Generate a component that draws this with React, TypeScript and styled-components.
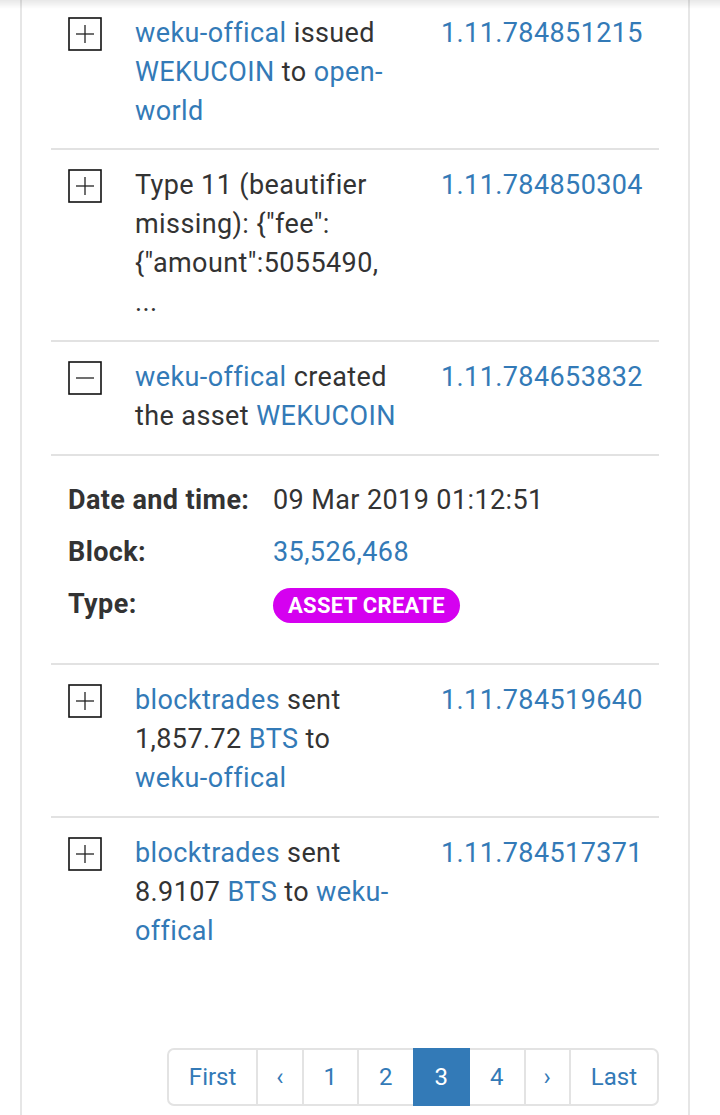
import * as React from 'react';
import styled, { createGlobalStyle } from 'styled-components';

const GlobalStyle = createGlobalStyle`
  html, body {
    margin: 0;
    padding: 0;
    background: #fff;
  }
  body {
    font-family: Roboto, "Noto Sans", "Liberation Sans", sans-serif;
    font-size: 27px;
    letter-spacing: 0.4px;
    line-height: 39px;
    color: #333;
  }
`;

const TopShadow = styled.div`
  position: fixed;
  top: 0;
  left: 0;
  right: 0;
  height: 9px;
  background: linear-gradient(rgba(0, 0, 0, 0.09), rgba(0, 0, 0, 0));
  pointer-events: none;
  z-index: 10;
`;

const Card = styled.div`
  margin: -2px 30px 0 20px;
  padding: 0 29px 40px;
  border: 2px solid #e6e6e6;
  border-top: none;
  min-height: 1200px;
  box-sizing: border-box;
  background: #fff;
`;

const List = styled.div`
  display: flex;
  flex-direction: column;
`;

const Row = styled.div<{ last?: boolean }>`
  display: grid;
  grid-template-columns: 84px 306px 1fr;
  padding: 16px 0 ${props => (props.last ? '16px' : '18px')};
  border-bottom: ${props => (props.last ? 'none' : '2px solid #e2e2e2')};

  &:first-child {
    padding-bottom: 17px;
  }
`;

const ToggleCell = styled.div`
  padding-left: 17px;
  padding-top: 3px;
`;

const ToggleBox = styled.svg`
  display: block;
  width: 34px;
  height: 34px;
`;

const Description = styled.div`
  padding-right: 40px;
`;

const OpId = styled.div`
  white-space: nowrap;
`;

const Link = styled.a`
  color: #337ab7;
  text-decoration: none;
`;

const Details = styled.div`
  display: grid;
  grid-template-columns: 205px 1fr;
  grid-auto-rows: 52px;
  align-items: center;
  padding: 18px 0 33px 17px;
  border-bottom: 2px solid #e2e2e2;
`;

const Label = styled.div`
  font-weight: 700;
`;

const Value = styled.div`
  white-space: nowrap;
`;

const Badge = styled.span`
  display: inline-block;
  height: 35px;
  line-height: 35px;
  padding: 0 15px;
  border-radius: 18px;
  background: #d500f0;
  color: #fff;
  font-size: 22px;
  letter-spacing: 0.3px;
  font-weight: 700;
  text-transform: uppercase;
  vertical-align: middle;
`;

const Pager = styled.nav`
  display: flex;
  justify-content: flex-end;
  margin-top: 81px;
`;

const PageList = styled.ul`
  display: flex;
  list-style: none;
  margin: 0;
  padding: 0;
`;

const PageItem = styled.li<{ active?: boolean; arrow?: boolean }>`
  display: flex;
  align-items: center;
  justify-content: center;
  height: 58px;
  padding: 0 ${props => (props.arrow ? '18px' : '20px')};
  box-sizing: border-box;
  margin-left: -2px;
  border: 2px solid ${props => (props.active ? '#337ab7' : '#e3e3e3')};
  background: ${props => (props.active ? '#337ab7' : '#fff')};
  color: ${props => (props.active ? '#fff' : '#337ab7')};
  font-size: 24px;
  letter-spacing: 0;
  position: relative;
  z-index: ${props => (props.active ? 1 : 0)};

  &:first-child {
    margin-left: 0;
    border-radius: 7px 0 0 7px;
  }
  &:last-child {
    border-radius: 0 7px 7px 0;
  }
`;

const Toggle: React.FC<{ open?: boolean }> = ({ open }) => (
  <ToggleBox viewBox="0 0 34 34">
    <rect x="1" y="1" width="32" height="32" fill="#fff" stroke="#111" strokeWidth="1.6" />
    <line x1="8" y1="17" x2="26" y2="17" stroke="#222" strokeWidth="1.3" />
    {!open && <line x1="17" y1="8" x2="17" y2="26" stroke="#222" strokeWidth="1.3" />}
  </ToggleBox>
);

type Op = {
  id: string;
  open?: boolean;
  text: React.ReactNode;
};

const ops: Op[] = [
  {
    id: '1.11.784851215',
    text: (
      <>
        <Link>weku-offical</Link> issued <Link>WEKUCOIN</Link> to <Link>open-world</Link>
      </>
    ),
  },
  {
    id: '1.11.784850304',
    text: <>Type 11 (beautifier missing): {'{"fee":'} {'{"amount":5055490,'} ...</>,
  },
  {
    id: '1.11.784653832',
    open: true,
    text: (
      <>
        <Link>weku-offical</Link> created the asset <Link>WEKUCOIN</Link>
      </>
    ),
  },
  {
    id: '1.11.784519640',
    text: (
      <>
        <Link>blocktrades</Link> sent 1,857.72 <Link>BTS</Link> to <Link>weku-offical</Link>
      </>
    ),
  },
  {
    id: '1.11.784517371',
    text: (
      <>
        <Link>blocktrades</Link> sent 8.9107 <Link>BTS</Link> to <Link>weku-offical</Link>
      </>
    ),
  },
];

const pages = ['First', '‹', '1', '2', '3', '4', '›', 'Last'];

export default function App() {
  return (
    <>
      <GlobalStyle />
      <TopShadow />
      <Card>
        <List>
          {ops.map((op, i) => (
            <React.Fragment key={op.id}>
              <Row last={i === ops.length - 1}>
                <ToggleCell>
                  <Toggle open={op.open} />
                </ToggleCell>
                <Description>{op.text}</Description>
                <OpId>
                  <Link>{op.id}</Link>
                </OpId>
              </Row>
              {op.open && (
                <Details>
                  <Label>Date and time:</Label>
                  <Value>09 Mar 2019 01:12:51</Value>
                  <Label>Block:</Label>
                  <Value>
                    <Link>35,526,468</Link>
                  </Value>
                  <Label>Type:</Label>
                  <Value>
                    <Badge>Asset create</Badge>
                  </Value>
                </Details>
              )}
            </React.Fragment>
          ))}
        </List>
        <Pager>
          <PageList>
            {pages.map(p => (
              <PageItem key={p} active={p === '3'} arrow={p === '‹' || p === '›'}>
                {p}
              </PageItem>
            ))}
          </PageList>
        </Pager>
      </Card>
    </>
  );
}
